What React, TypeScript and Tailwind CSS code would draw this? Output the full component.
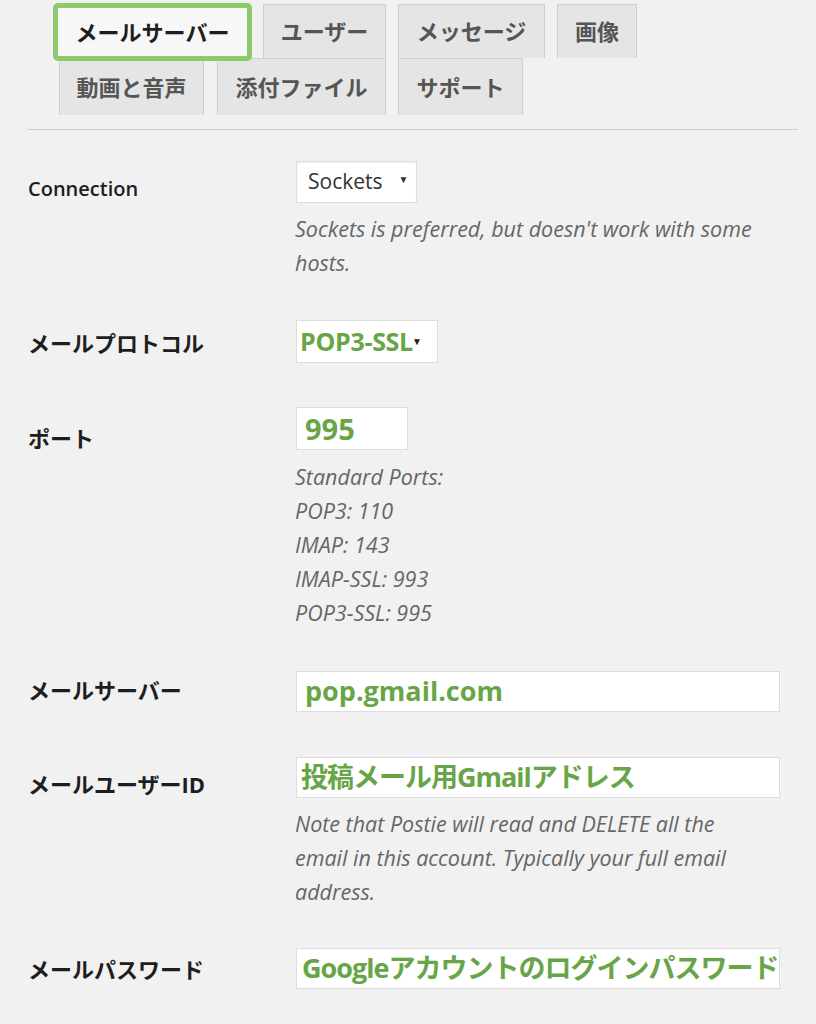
import React from "react";

const jp = "font-['Open_Sans','Noto_Sans_CJK_JP',sans-serif]";

function Tab({ label, w, active }: { label: string; w: string; active?: boolean }) {
    if (active) {
        return (
            <div className={`${w} h-[58px] -mt-[1px] relative z-10 flex items-center justify-center bg-[#f7f7f7] border-[5px] border-[#8dca6c] rounded-[5px] text-[22px] font-bold text-[#1e1e1e] ${jp}`}>
                {label}
            </div>
        );
    }
    return (
        <div className={`${w} h-full flex items-center justify-center bg-[#e5e5e5] border border-[#cfcfcf] border-b-0 text-[22px] font-bold text-[#555] ${jp}`}>
            {label}
        </div>
    );
}

function Row({ label, top, pad, children }: { label: React.ReactNode; top: string; pad: string; children: React.ReactNode }) {
    return (
        <div className={`flex ${top}`}>
            <div className={`w-[269px] shrink-0 ${pad} leading-[30px] text-[#1e1e1e] ${jp}`}>{label}</div>
            <div className="flex-1">{children}</div>
        </div>
    );
}

const desc = "font-['Open_Sans',sans-serif] italic text-[21.5px] leading-[34px] text-[#666]";
const green = `${jp} font-bold text-[#67a547] whitespace-nowrap`;
const jlabel = "text-[22px] font-bold";

export default function App() {
    return (
        <div className="w-[816px] h-[1024px] bg-[#f1f1f1] overflow-hidden">
            {/* tabs */}
            <div className="pt-[4px]">
                <div className="flex items-start pl-[53px] gap-[11px] h-[54px]">
                    <Tab label="メールサーバー" w="w-[199px]" active />
                    <div className="flex gap-[12px] h-[54px]">
                        <Tab label="ユーザー" w="w-[123px]" />
                        <Tab label="メッセージ" w="w-[147px]" />
                        <Tab label="画像" w="w-[80px]" />
                    </div>
                </div>
                <div className="flex pl-[59px] gap-[13px] h-[57px]">
                    <Tab label="動画と音声" w="w-[145px]" />
                    <div className="flex gap-[12px]">
                        <Tab label="添付ファイル" w="w-[169px]" />
                        <Tab label="サポート" w="w-[125px]" />
                    </div>
                </div>
            </div>
            <div className="ml-[28px] mr-[18px] mt-[14px] border-t border-[#cccccc]" />

            <div className="pl-[28px] pr-[36px]">
                <Row label={<span className="text-[20px] font-semibold">Connection</span>} top="mt-[31px]" pad="pt-[13px]">
                    <div className="-ml-px w-[121px] h-[42px] bg-white border border-[#dddddd] shadow-[inset_0_1px_2px_rgba(0,0,0,0.07)] flex items-center pl-[11px] font-['Open_Sans',sans-serif] text-[21px] text-[#333]">
                        Sockets
                        <span className="ml-[16px] text-[10px] -mt-[5px]">▼</span>
                    </div>
                    <div className={`${desc} mt-[9px] -ml-[2px]`}>
                        Sockets is preferred, but doesn't work with some
                        <br />
                        hosts.
                    </div>
                </Row>

                <Row label={<span className={jlabel}>メールプロトコル</span>} top="mt-[40px]" pad="pt-[8px]">
                    <div className="-ml-px w-[142px] h-[43px] bg-white border border-[#dddddd] flex items-center pl-[3px]">
                        <span className={`${green} text-[25px] tracking-[-0.3px]`}>POP3-SSL</span>
                        <span className="-ml-[1px] text-[10px] text-[#222]">▼</span>
                    </div>
                </Row>

                <Row label={<span className={jlabel}>ポート</span>} top="mt-[44px]" pad="pt-[16px]">
                    <div className="-ml-px w-[112px] h-[43px] bg-white border border-[#dddddd] flex items-center pl-[8px]">
                        <span className={`${green} text-[29px]`}>995</span>
                    </div>
                    <div className={`${desc} mt-[10px] -ml-[2px]`}>
                        Standard Ports:
                        <br />
                        POP3: 110
                        <br />
                        IMAP: 143
                        <br />
                        IMAP-SSL: 993
                        <br />
                        POP3-SSL: 995
                    </div>
                </Row>

                <Row label={<span className={jlabel}>メールサーバー</span>} top="mt-[41px]" pad="pt-[4px]">
                    <div className="-ml-px w-[484px] h-[41px] bg-white border border-[#dddddd] flex items-center pl-[8px]">
                        <span className={`${green} text-[27px]`}>pop.gmail.com</span>
                    </div>
                </Row>

                <Row label={<span className={jlabel}>メールユーザーID</span>} top="mt-[45px]" pad="pt-[12px]">
                    <div className="-ml-px w-[484px] h-[41px] bg-white border border-[#dddddd] flex items-center pl-[4px]">
                        <span className={`${green} text-[27px] tracking-[-1px]`}>投稿メール用Gmailアドレス</span>
                    </div>
                    <div className={`${desc} mt-[9px] -ml-[2px]`}>
                        Note that Postie will read and DELETE all the
                        <br />
                        email in this account. Typically your full email
                        <br />
                        address.
                    </div>
                </Row>

                <Row label={<span className={jlabel}>メールパスワード</span>} top="mt-[39px]" pad="pt-[6px]">
                    <div className="-ml-px w-[484px] h-[41px] bg-white border border-[#dddddd] flex items-center pl-[5px] overflow-hidden">
                        <span className={`${green} text-[27px] tracking-[-1px]`}>Googleアカウントのログインパスワード</span>
                    </div>
                </Row>
            </div>
        </div>
    );
}
